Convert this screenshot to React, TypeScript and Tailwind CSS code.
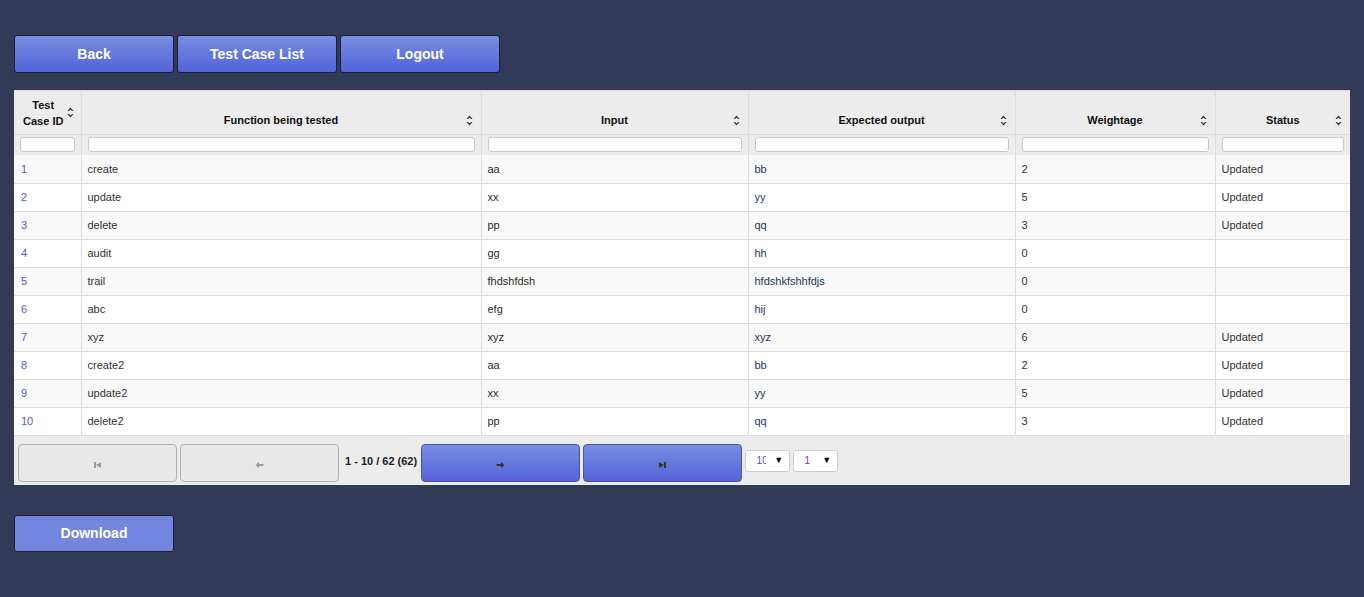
import React from 'react'

type Row = {
  id: number
  fn: string
  input: string
  expected: string
  weight: string
  status: string
}

const rows: Row[] = [
  { id: 1, fn: 'create', input: 'aa', expected: 'bb', weight: '2', status: 'Updated' },
  { id: 2, fn: 'update', input: 'xx', expected: 'yy', weight: '5', status: 'Updated' },
  { id: 3, fn: 'delete', input: 'pp', expected: 'qq', weight: '3', status: 'Updated' },
  { id: 4, fn: 'audit', input: 'gg', expected: 'hh', weight: '0', status: '' },
  { id: 5, fn: 'trail', input: 'fhdshfdsh', expected: 'hfdshkfshhfdjs', weight: '0', status: '' },
  { id: 6, fn: 'abc', input: 'efg', expected: 'hij', weight: '0', status: '' },
  { id: 7, fn: 'xyz', input: 'xyz', expected: 'xyz', weight: '6', status: 'Updated' },
  { id: 8, fn: 'create2', input: 'aa', expected: 'bb', weight: '2', status: 'Updated' },
  { id: 9, fn: 'update2', input: 'xx', expected: 'yy', weight: '5', status: 'Updated' },
  { id: 10, fn: 'delete2', input: 'pp', expected: 'qq', weight: '3', status: 'Updated' },
]

const columns = [
  { label: 'Function being tested', width: 'w-[400px]' },
  { label: 'Input', width: 'w-[267px]' },
  { label: 'Expected output', width: 'w-[267px]' },
  { label: 'Weightage', width: 'w-[200px]' },
  { label: 'Status', width: 'w-[135px]' },
]

function SortIcon() {
  return (
    <svg width="7" height="11" viewBox="0 0 7 11" className="inline-block">
      <path d="M3.5 0.5 L6.5 4 L0.5 4 Z" fill="#333" />
      <path d="M3.5 10.5 L6.5 7 L0.5 7 Z" fill="#333" />
      <path d="M3.5 2.5 L5 4 L2 4 Z" fill="#ececec" />
      <path d="M3.5 8.5 L5 7 L2 7 Z" fill="#ececec" />
    </svg>
  )
}

function NavButton({ kind, enabled }: { kind: 'first' | 'prev' | 'next' | 'last'; enabled: boolean }) {
  const color = enabled ? '#333' : '#999'
  return (
    <button
      className={
        enabled
          ? 'flex h-[38px] w-[159px] items-center justify-center rounded-[4px] border border-[#4a55a8] bg-gradient-to-b from-[#7a8ce2] to-[#5463d8] pt-[4px]'
          : 'flex h-[38px] w-[159px] items-center justify-center rounded-[4px] border border-[#b0b0b0] bg-[#e8e8e8] pt-[4px]'
      }
    >
      <svg width="9" height="8" viewBox="0 0 9 8">
        {kind === 'first' && (
          <>
            <rect x="1" y="1" width="2" height="6" fill={color} />
            <path d="M8 1 L3 4 L8 7 Z" fill={color} />
          </>
        )}
        {kind === 'last' && (
          <>
            <rect x="6" y="1" width="2" height="6" fill={color} />
            <path d="M1 1 L6 4 L1 7 Z" fill={color} />
          </>
        )}
        {kind === 'prev' && (
          <>
            <path d="M0.5 4 L4 0.8 L4 7.2 Z" fill={color} />
            <rect x="3.5" y="3" width="5" height="2" fill={color} />
          </>
        )}
        {kind === 'next' && (
          <>
            <path d="M8.5 4 L5 0.8 L5 7.2 Z" fill={color} />
            <rect x="0.5" y="3" width="5" height="2" fill={color} />
          </>
        )}
      </svg>
    </button>
  )
}

function FakeSelect({ value, color }: { value: string; color: string }) {
  return (
    <div className="mt-[6px] flex h-[22px] w-[45px] items-center justify-between rounded-[3px] border border-[#ccc] bg-white pl-[10px] pr-[6px]">
      <span className={`w-[10px] overflow-hidden whitespace-nowrap text-[11px] ${color}`}>{value}</span>
      <span className="text-[9px] text-black">▼</span>
    </div>
  )
}

export default function App() {
  return (
    <div
      className="min-h-[597px] w-full bg-[#313a56] px-[14px] pt-[35px]"
      style={{ fontFamily: '"Liberation Sans", Arial, sans-serif' }}
    >
      <div className="flex gap-[3px]">
        {['Back', 'Test Case List', 'Logout'].map((label) => (
          <button
            key={label}
            className="h-[38px] w-[160px] rounded-[3px] border border-[#1c2033] bg-gradient-to-b from-[#7a8de3] to-[#5262d8] text-[14px] font-bold text-white"
          >
            {label}
          </button>
        ))}
      </div>

      <div className="mt-[17px] w-[1336px] border-t border-[#d8d8d8] bg-[#ececec]">
        <table className="w-full table-fixed border-collapse text-[11px] text-[#333]">
          <colgroup>
            <col className="w-[67px]" />
            {columns.map((c) => (
              <col key={c.label} className={c.width} />
            ))}
          </colgroup>
          <thead>
            <tr className="h-[43px] bg-[#ececec]">
              <th className="border-r border-b border-[#dcdcdc] px-1 pt-[1px] align-middle font-bold text-[#111]">
                <div className="flex items-center justify-center gap-[4px] pl-[3px]">
                  <span className="leading-[16px]">
                    Test
                    <br />
                    Case ID
                  </span>
                  <SortIcon />
                </div>
              </th>
              {columns.map((c, i) => (
                <th
                  key={c.label}
                  className={
                    i === columns.length - 1
                      ? 'relative border-b border-[#dcdcdc] pb-[5px] align-bottom font-bold text-[#111]'
                      : 'relative border-r border-b border-[#dcdcdc] pb-[5px] align-bottom font-bold text-[#111]'
                  }
                >
                  <span>{c.label}</span>
                  <span className="absolute right-[8px] bottom-[6px]">
                    <SortIcon />
                  </span>
                </th>
              ))}
            </tr>
            <tr className="h-[21px] bg-[#ececec]">
              {[0, 1, 2, 3, 4, 5].map((i) => (
                <td key={i} className={i === 5 ? 'px-[6px]' : 'border-r border-[#dcdcdc] px-[6px]'}>
                  <div className="h-[15px] w-full rounded-[3px] border border-[#c8c8c8] bg-white" />
                </td>
              ))}
            </tr>
          </thead>
          <tbody>
            {rows.map((r, idx) => (
              <tr key={r.id} className={idx % 2 === 0 ? 'h-[28px] bg-[#f9f9f9]' : 'h-[28px] bg-white'}>
                <td className="border-r border-b border-[#dcdcdc] px-[7px] text-[#4a5cc8]">{r.id}</td>
                <td className="border-r border-b border-[#dcdcdc] px-[6px]">{r.fn}</td>
                <td className="border-r border-b border-[#dcdcdc] px-[6px] text-[#2d2a1f]">{r.input}</td>
                <td className="border-r border-b border-[#dcdcdc] px-[6px] text-[#1f3563]">{r.expected}</td>
                <td className="border-r border-b border-[#dcdcdc] px-[6px]">{r.weight}</td>
                <td className="border-b border-[#dcdcdc] px-[6px]">{r.status}</td>
              </tr>
            ))}
          </tbody>
        </table>

        <div className="flex h-[49px] items-start gap-[3px] pt-[8px] pl-[4px]">
          <NavButton kind="first" enabled={false} />
          <NavButton kind="prev" enabled={false} />
          <span className="mt-[9px] pl-[3px] pr-[1px] text-[11px] font-bold text-[#222]">1 - 10 / 62 (62)</span>
          <NavButton kind="next" enabled />
          <NavButton kind="last" enabled />
          <FakeSelect value="10" color="text-[#6a4fc8]" />
          <FakeSelect value="1" color="text-[#8a3fa8]" />
        </div>
      </div>

      <button className="mt-[30px] h-[37px] w-[160px] rounded-[3px] border border-[#1c2033] bg-[#7385de] text-[14px] font-bold text-white">
        Download
      </button>
    </div>
  )
}
